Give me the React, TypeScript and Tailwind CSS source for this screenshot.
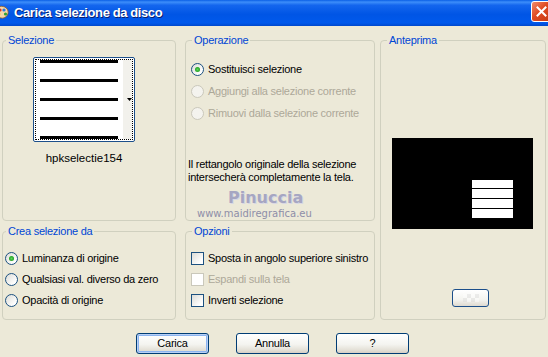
import type { ReactNode } from 'react';

const ui = "font-['Liberation_Sans',Arial,sans-serif]";

function Group({ title, className = '', legendClass = 'ml-[6px]', children }: { title: string; className?: string; legendClass?: string; children?: ReactNode }) {
  return (
    <fieldset className={`relative m-0 h-full min-w-0 rounded-[4px] border border-[#D0D0BF] p-0 ${className}`}>
      <legend className={`px-[2px] text-[11px] leading-[13px] text-[#0046D5] ${legendClass}`}>{title}</legend>
      {children}
    </fieldset>
  );
}

function Radio({ label, checked = false, disabled = false, h = 'h-[21px]' }: { label: string; checked?: boolean; disabled?: boolean; h?: string }) {
  return (
    <div className={`flex items-center gap-[4px] whitespace-nowrap ${h}`}>
      <span
        className={`flex h-[13px] w-[13px] shrink-0 items-center justify-center rounded-full border ${
          disabled
            ? 'border-[#CAC8BB] bg-[#F4F3EE]'
            : 'border-[#1C5180] bg-[linear-gradient(135deg,#DCDCD7_0%,#FFFFFF_80%)]'
        }`}
      >
        {checked && <span className="h-[5px] w-[5px] rounded-full bg-[radial-gradient(circle,#5CD65C_0%,#21A121_70%)]" />}
      </span>
      <span className={disabled ? 'text-[#ACA899]' : 'text-black'}>{label}</span>
    </div>
  );
}

function Check({ label, disabled = false }: { label: string; disabled?: boolean }) {
  return (
    <div className="flex h-[21px] items-center gap-[4px] whitespace-nowrap">
      <span
        className={`h-[13px] w-[13px] shrink-0 border ${
          disabled
            ? 'border-[#CAC8BB] bg-white'
            : 'border-[#1C5180] bg-[linear-gradient(135deg,#DCDCD7_0%,#FFFFFF_80%)]'
        }`}
      />
      <span className={disabled ? 'text-[#ACA899]' : 'text-black'}>{label}</span>
    </div>
  );
}

function XpButton({ label, isDefault = false }: { label: string; isDefault?: boolean }) {
  return (
    <button
      className={`h-[21px] w-[73px] rounded-[3px] border border-[#003C74] bg-[linear-gradient(180deg,#FFFFFF_0%,#F4F4F0_55%,#E3E0D6_85%,#D6D0C5_100%)] text-[11px] leading-none text-black ${
        isDefault ? 'shadow-[inset_0_0_0_1px_#B8D0F5,inset_0_0_0_2px_#8CB4F0]' : ''
      }`}
    >
      {label}
    </button>
  );
}

function PspIcon() {
  return (
    <svg width="16" height="16" viewBox="0 0 16 16" className="ml-[-6px] shrink-0">
      <path d="M2 3 C6 0 13 1 14 6 C15 10 11 14 7 13 C3 12 0 8 2 3 Z" fill="#F3D6A8" stroke="#8A5A2A" strokeWidth="0.8" />
      <circle cx="6" cy="5" r="1.6" fill="#E03020" />
      <circle cx="10" cy="5" r="1.6" fill="#2A7AE0" />
      <circle cx="11.5" cy="9" r="1.6" fill="#30A030" />
      <circle cx="5" cy="9" r="1.4" fill="#F0C020" />
    </svg>
  );
}

export default function App() {
  return (
    <div className={`h-[357px] w-[548px] overflow-hidden bg-[#ECE9D8] text-[11px] tracking-[-0.25px] text-black ${ui}`}>
      {/* title bar */}
      <div className="flex h-[26px] items-center bg-[linear-gradient(180deg,#0A5FE6_0%,#3D8EFA_8%,#1466EE_20%,#0055E5_55%,#0059EC_88%,#0048CC_100%)]">
        <PspIcon />
        <span className="ml-[4px] text-[13px] font-bold tracking-[-0.4px] text-white [text-shadow:1px_1px_0_#0A1E6E]">
          Carica selezione da disco
        </span>
        <div className="ml-auto mr-[-4px] mt-[-3px] flex h-[21px] w-[21px] items-center justify-center rounded-[3px] border border-white bg-[linear-gradient(135deg,#F08C6C_0%,#E04A22_45%,#C43A12_100%)]">
          <svg width="11" height="11" viewBox="0 0 11 11">
            <path d="M1.5 1.5 L9.5 9.5 M9.5 1.5 L1.5 9.5" stroke="#FFFFFF" strokeWidth="2" strokeLinecap="square" />
          </svg>
        </div>
      </div>

      {/* groups */}
      <div className="grid grid-cols-[174px_9px_190px_5px_166px] grid-rows-[187px_95px] gap-y-[4px] pl-[2px] pt-[8px]">
        <Group title="Selezione" legendClass="ml-[3px]" className="col-start-1 row-start-1">
          <div className="ml-[30px] mt-[10px] flex w-[102px] flex-col items-center">
            <div className="h-[85px] w-[102px] rounded-[2px] border border-[#1C4F8A] bg-white p-[1px]">
              <div className="flex h-full border border-dotted border-black">
                <div className="flex flex-1 flex-col justify-between overflow-hidden bg-white pl-[4px] pr-[1px]">
                  <div className="h-[3px] w-[78px] bg-black" />
                  <div className="h-[3px] w-[78px] bg-black" />
                  <div className="h-[3px] w-[78px] bg-black" />
                  <div className="h-[3px] w-[78px] bg-black" />
                  <div className="h-[3px] w-[78px] bg-black" />
                </div>
                <div className="flex w-[9px] items-center justify-end bg-[#F2F1EC]">
                  <svg width="5" height="3" viewBox="0 0 5 3">
                    <path d="M0 0 H5 L2.5 3 Z" fill="#000" />
                  </svg>
                </div>
              </div>
            </div>
            <div className="mt-[10px] text-[11.5px] leading-[13px] tracking-normal">hpkselectie154</div>
          </div>
        </Group>

        <Group title="Operazione" className="col-start-3 row-start-1">
          <div className="mt-[11px] pl-[5px]">
            <Radio label="Sostituisci selezione" checked h="h-[22px]" />
            <Radio label="Aggiungi alla selezione corrente" disabled h="h-[22px]" />
            <Radio label="Rimuovi dalla selezione corrente" disabled h="h-[22px]" />
          </div>
          <div className="mt-[34px] whitespace-nowrap pl-[2px] leading-[13px]">
            Il rettangolo originale della selezione
            <br />
            intersecherà completamente la tela.
          </div>
          <div className="pointer-events-none absolute left-[42px] top-[141px] font-['DejaVu_Sans',sans-serif] text-[16px] font-bold leading-[20px] tracking-normal text-[#A6A6C2] [text-shadow:1px_1px_0_#D8D8E4]">
            Pinuccia
          </div>
          <div className="pointer-events-none absolute left-[11px] top-[161px] font-['DejaVu_Sans',sans-serif] text-[10px] leading-[12px] tracking-normal text-[#8E8EA8]">
            www.maidiregrafica.eu
          </div>
        </Group>

        <Group title="Anteprima" className="col-start-5 row-span-2 row-start-1">
          <div className="ml-[11px] mt-[91px] flex h-[91px] w-[141px] items-start justify-end bg-black pr-[20px] pt-[42px]">
            <div className="flex w-[41px] flex-col gap-[1px]">
              <div className="h-[8px] bg-white" />
              <div className="h-[9px] bg-white" />
              <div className="h-[9px] bg-white" />
              <div className="h-[9px] bg-white" />
            </div>
          </div>
          <div className="ml-[71px] mt-[60px] flex h-[18px] w-[37px] items-center justify-center rounded-[3px] border border-[#1C4F8A] bg-[linear-gradient(180deg,#FFFFFF_0%,#F4F4F0_60%,#DEDAD0_100%)]">
            <div className="grid grid-cols-4 grid-rows-2 opacity-40">
              {[0, 1, 0, 1, 1, 0, 1, 0].map((v, i) => (
                <span key={i} className={`h-[4px] w-[4px] ${v ? 'bg-[#D8D8D8]' : 'bg-white'}`} />
              ))}
            </div>
          </div>
        </Group>

        <Group title="Crea selezione da" legendClass="ml-[3px]" className="col-start-1 row-start-2">
          <div className="mt-[10px] pl-[2px]">
            <Radio label="Luminanza di origine" checked />
            <Radio label="Qualsiasi val. diverso da zero" />
            <Radio label="Opacità di origine" />
          </div>
        </Group>

        <Group title="Opzioni" className="col-start-3 row-start-2">
          <div className="mt-[10px] pl-[5px]">
            <Check label="Sposta in angolo superiore sinistro" />
            <Check label="Espandi sulla tela" disabled />
            <Check label="Inverti selezione" />
          </div>
        </Group>
      </div>

      {/* buttons */}
      <div className="mt-[13px] flex gap-[27px] pl-[136px]">
        <XpButton label="Carica" isDefault />
        <XpButton label="Annulla" />
        <XpButton label="?" />
      </div>
    </div>
  );
}
